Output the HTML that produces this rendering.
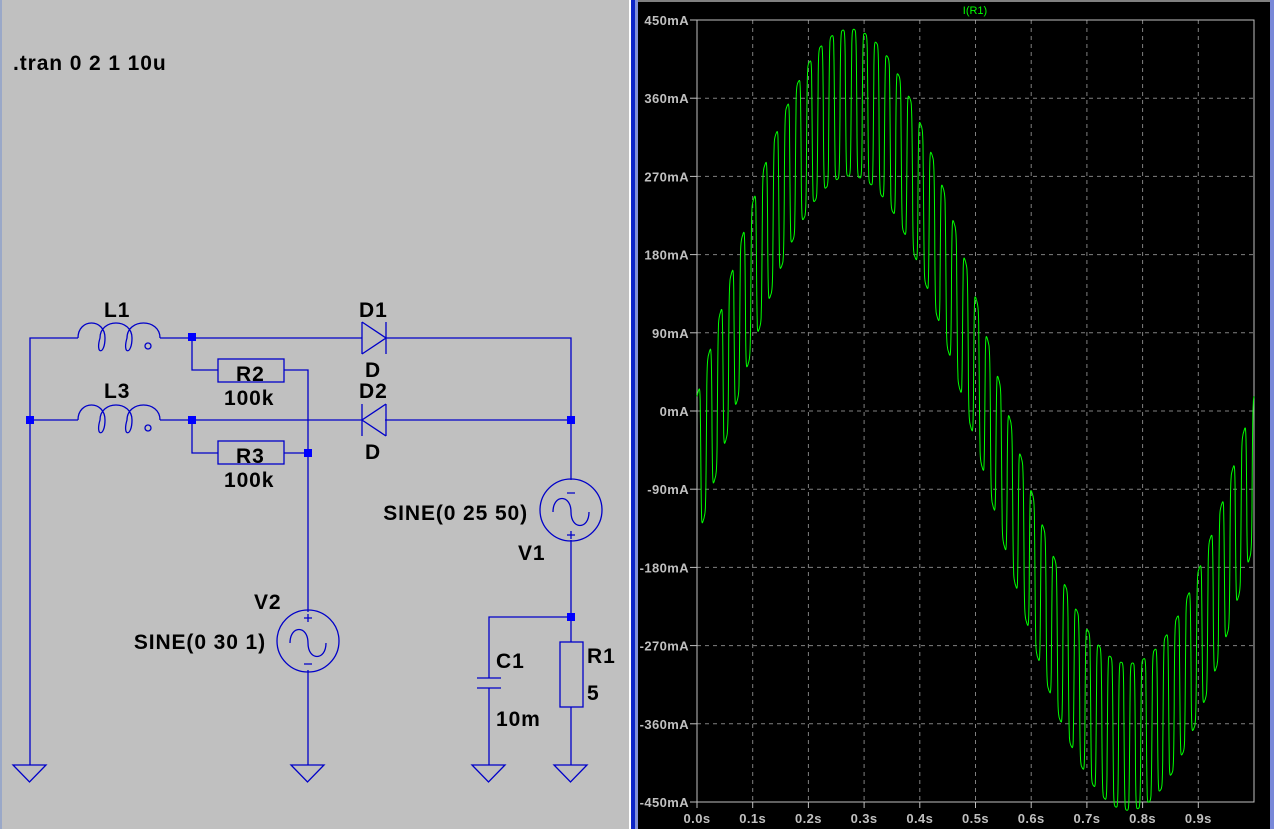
<!DOCTYPE html>
<html><head><meta charset="utf-8"><style>
html,body{margin:0;padding:0;width:1274px;height:829px;overflow:hidden;background:#c0c0c0}
svg{position:absolute;left:0;top:0}
.t{font-family:"Liberation Sans",Arial,sans-serif;font-size:21px;font-weight:bold;letter-spacing:0.9px;fill:#000}
.a{font-family:"Liberation Sans",Arial,sans-serif;font-size:13px;font-weight:bold;letter-spacing:0.4px;fill:#c0c0c0}
</style></head><body>
<svg width="1274" height="829" xmlns="http://www.w3.org/2000/svg">
<rect x="0" y="0" width="629" height="829" fill="#c0c0c0"/>
<rect x="0" y="0" width="2" height="829" fill="#9aa8c8"/>
<rect x="629" y="0" width="2" height="829" fill="#ffffff"/>
<rect x="631" y="0" width="4" height="829" fill="#0b24c8"/>
<rect x="635" y="0" width="3" height="829" fill="#8090d8"/>
<rect x="638" y="0" width="636" height="829" fill="#000"/>
<rect x="638" y="0" width="636" height="2" fill="#808080"/>
<rect x="1270" y="0" width="4" height="829" fill="#7888d8"/>
<g fill="none" stroke="#0000c8" stroke-width="1.3">
<path d="M30 765V338H78 M160 338H362 M385 338H571V480 M30 420H78 M160 420H362 M385 420H571"/>
<path d="M192 338V370H218 M284 370H308V612 M192 420V453H218 M284 453H308"/>
<path d="M308 670V765 M571 540V617H489V678 M489 688V765 M571 617V642 M571 707V765"/>
<path d="M78 338 C78 318 105 318 105 338 C105 355 95 355 100 338 C100 318 132 318 132 338 C132 355 122 355 127 338 C127 318 160 318 160 338"/>
<path d="M78 420 C78 400 105 400 105 420 C105 437 95 437 100 420 C100 400 132 400 132 420 C132 437 122 437 127 420 C127 400 160 400 160 420"/>
<circle cx="148" cy="346" r="3"/><circle cx="148" cy="428" r="3"/>
<rect x="218" y="359" width="66" height="23"/>
<rect x="218" y="441" width="66" height="23"/>
<rect x="560" y="642" width="23" height="65"/>
<path d="M362 322V354 M362 322L386 338L362 354 M386 322V354"/>
<path d="M386 404V436 M386 404L362 420L386 436 M362 404V436"/>
<path d="M477 678H501 M477 688H501"/>
<circle cx="571" cy="510" r="31"/>
<path d="M567 493H575 M567 535H575 M571 531V539 M553 512 C553 494 571 494 571 512 C571 530 589 530 589 512"/>
<circle cx="308" cy="641" r="31"/>
<path d="M304 618H312 M308 614V622 M304 664H312 M290 643 C290 625 308 625 308 643 C308 661 326 661 326 643"/>
<path d="M13 765H46L29.5 782Z M291 765H324L307.5 782Z M472 765H505L488.5 782Z M554 765H587L570.5 782Z"/>
</g>
<g fill="#0000ff">
<rect x="26" y="416" width="8" height="8"/><rect x="188" y="333" width="8" height="8"/><rect x="188" y="416" width="8" height="8"/>
<rect x="304" y="449" width="8" height="8"/><rect x="567" y="416" width="8" height="8"/><rect x="567" y="613" width="8" height="8"/>
</g>
<text class="t" x="13" y="70">.tran 0 2 1 10u</text>
<text class="t" x="104" y="317">L1</text>
<text class="t" x="104" y="398">L3</text>
<text class="t" x="236" y="381">R2</text>
<text class="t" x="224" y="405">100k</text>
<text class="t" x="236" y="463">R3</text>
<text class="t" x="224" y="487">100k</text>
<text class="t" x="359" y="317">D1</text>
<text class="t" x="365" y="377">D</text>
<text class="t" x="359" y="398">D2</text>
<text class="t" x="365" y="459">D</text>
<text class="t" x="528" y="520" text-anchor="end">SINE(0 25 50)</text>
<text class="t" x="518" y="560">V1</text>
<text class="t" x="254" y="609">V2</text>
<text class="t" x="266" y="649" text-anchor="end">SINE(0 30 1)</text>
<text class="t" x="496" y="668">C1</text>
<text class="t" x="496" y="726">10m</text>
<text class="t" x="587" y="663">R1</text>
<text class="t" x="587" y="700">5</text>
<g id="grid" stroke="#808080" stroke-dasharray="4,4" stroke-width="1"></g>
<rect x="697" y="20" width="557" height="782" fill="none" stroke="#c0c0c0" stroke-width="1"/>
<g id="lbl"></g>
<text x="975" y="14" text-anchor="middle" font-family="Liberation Sans,sans-serif" font-size="11" fill="#00ff00">I(R1)</text>
<path id="w" fill="none" stroke="#00ff00" stroke-width="1"/>
</svg>
<script>
var ns="http://www.w3.org/2000/svg",g=document.getElementById('grid'),L=document.getElementById('lbl');
function el(p,n,a){var e=document.createElementNS(ns,n);for(var k in a)e.setAttribute(k,a[k]);p.appendChild(e);return e;}
var ys=['450mA','360mA','270mA','180mA','90mA','0mA','-90mA','-180mA','-270mA','-360mA','-450mA'];
for(var i=0;i<11;i++){var y=20+i*78.2;
 if(i>0&&i<10)el(g,'line',{x1:697,x2:1254,y1:y,y2:y});
 el(L,'line',{x1:690,x2:697,y1:y,y2:y,stroke:'#c0c0c0'});
 var t=el(L,'text',{x:689,y:y+5,'text-anchor':'end','class':'a'});t.textContent=ys[i];}
for(var i=0;i<10;i++){var x=697+i*55.7;
 if(i>0)el(g,'line',{x1:x,x2:x,y1:20,y2:802});
 el(L,'line',{x1:x,x2:x,y1:802,y2:808,stroke:'#c0c0c0'});
 var t=el(L,'text',{x:x,y:823,'text-anchor':'middle','class':'a'});t.textContent='0.'+i+'s';}
var d='';for(var k=0;k<=3000;k++){var tt=k/3000;
 var c=-10+365*Math.sin(2*Math.PI*(tt-0.025));
 var r=85*Math.tanh(3*Math.sin(2*Math.PI*50*tt+1));
 var v=c+r;var x=697+tt*557,y=411-v*78.2/90;
 d+=(k?'L':'M')+x.toFixed(1)+' '+y.toFixed(1);}
document.getElementById('w').setAttribute('d',d);
</script>
</body></html>
